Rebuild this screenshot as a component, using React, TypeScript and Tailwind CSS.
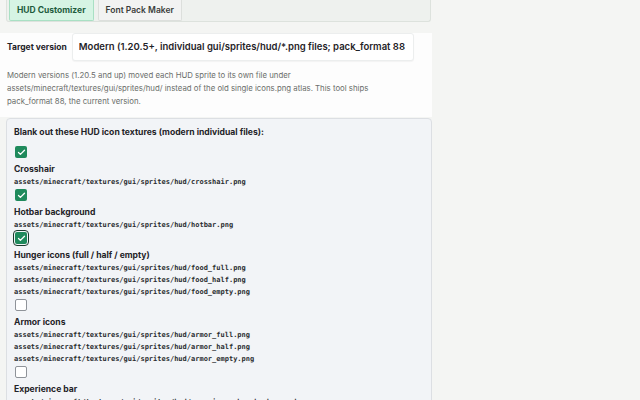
import { Check } from "lucide-react";

type Item = {
  label: string;
  paths: string[];
  checked: boolean;
  focused?: boolean;
};

const items: Item[] = [
  {
    label: "Crosshair",
    paths: ["assets/minecraft/textures/gui/sprites/hud/crosshair.png"],
    checked: true,
  },
  {
    label: "Hotbar background",
    paths: ["assets/minecraft/textures/gui/sprites/hud/hotbar.png"],
    checked: true,
  },
  {
    label: "Hunger icons (full / half / empty)",
    paths: [
      "assets/minecraft/textures/gui/sprites/hud/food_full.png",
      "assets/minecraft/textures/gui/sprites/hud/food_half.png",
      "assets/minecraft/textures/gui/sprites/hud/food_empty.png",
    ],
    checked: true,
    focused: true,
  },
  {
    label: "Armor icons",
    paths: [
      "assets/minecraft/textures/gui/sprites/hud/armor_full.png",
      "assets/minecraft/textures/gui/sprites/hud/armor_half.png",
      "assets/minecraft/textures/gui/sprites/hud/armor_empty.png",
    ],
    checked: false,
  },
  {
    label: "Experience bar",
    paths: [
      "assets/minecraft/textures/gui/sprites/hud/experience_bar_background.png",
      "assets/minecraft/textures/gui/sprites/hud/experience_bar_progress.png",
    ],
    checked: false,
  },
];

function Box({ checked, focused }: { checked: boolean; focused?: boolean }) {
  if (checked) {
    return (
      <div
        className={`w-3 h-3 rounded-[2px] bg-[#1f8a5c] flex items-center justify-center ${
          focused ? "outline outline-[1.5px] outline-[#1d3b2e] outline-offset-[1px]" : ""
        }`}
      >
        <Check size={9} strokeWidth={3.5} className="text-white" />
      </div>
    );
  }
  return <div className="w-3 h-3 rounded-[2px] bg-white border border-[#8f9399]" />;
}

export default function App() {
  return (
    <div className="w-[640px] h-[400px] overflow-hidden bg-[#f4f5f3] text-[#1f2328] font-['Inter',sans-serif]">
      <div className="w-[432px]">
        {/* Tabs */}
        <div className="ml-[6px] w-[425px] h-[22px] bg-[#eef1ee] border border-t-0 border-[#dde2dd] rounded-b-[3px] flex items-start gap-[4px] pl-[2px]">
          <div className="h-[21px] px-[7px] flex items-center bg-[#d6f4e4] border border-t-0 border-[#a9e0c4] rounded-b-[2px] text-[8.5px] font-bold text-[#1e5c3d]">
            HUD Customizer
          </div>
          <div className="h-[21px] px-[7px] flex items-center bg-[#f2f3f2] border border-t-0 border-[#dcdfdc] rounded-b-[2px] text-[8.5px] font-semibold text-[#3a3d3a]">
            Font Pack Maker
          </div>
        </div>

        {/* Target version */}
        <div className="mt-[11px] bg-[#fdfdfd] pl-[7px] pr-[18px] pb-[9px]">
          <div className="flex items-center gap-[5px] h-[28px]">
            <span className="text-[8.5px] font-bold whitespace-nowrap">Target version</span>
            <div className="flex-1 h-[28px] bg-white border border-[#eceeee] rounded-[3px] shadow-[0_1px_1px_rgba(0,0,0,0.04)] flex items-center pl-[6px]">
              <span className="block w-[326px] overflow-hidden">
                <span className="block text-[9.5px] font-semibold whitespace-nowrap">
                  Modern (1.20.5+, individual gui/sprites/hud/*.png files; pack_format 88)
                </span>
              </span>
            </div>
          </div>
          <p className="mt-[8px] text-[7.8px] leading-[13px] text-[#6b6e6b]">
            Modern versions (1.20.5 and up) moved each HUD sprite to its own file under
            assets/minecraft/textures/gui/sprites/hud/ instead of the old single icons.png atlas. This tool ships
            pack_format 88, the current version.
          </p>
        </div>

        {/* Card */}
        <div className="ml-[6px] mt-[1px] w-[426px] bg-[#f2f4f7] border border-[#dcdfe3] rounded-[4px] pl-[7px] pt-[6px] pb-[10px]">
          <div className="text-[8.6px] leading-[14px] font-bold">
            Blank out these HUD icon textures (modern individual files):
          </div>
          <div className="mt-[7px] flex flex-col gap-[1px]">
            {items.map((it) => (
              <div key={it.label} className="flex flex-col">
                <div className="pl-[1px]">
                  <Box checked={it.checked} focused={it.focused} />
                </div>
                <div className="mt-[4px] text-[8.6px] leading-[14px] font-bold">{it.label}</div>
                {it.paths.map((p) => (
                  <div
                    key={p}
                    className="font-['DejaVu_Sans_Mono',monospace] text-[7px] leading-[12px] text-[#2a2d30] font-semibold"
                  >
                    {p}
                  </div>
                ))}
              </div>
            ))}
          </div>
        </div>
      </div>
    </div>
  );
}
